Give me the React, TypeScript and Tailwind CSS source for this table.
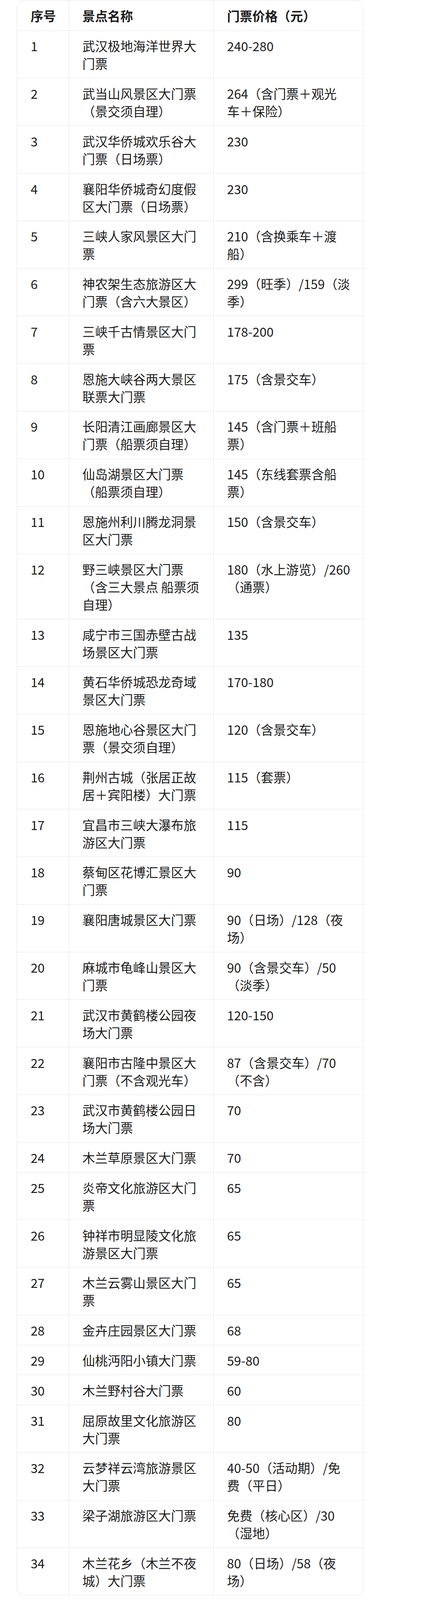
const rows: [string, string, string][] = [
  ["1", "武汉极地海洋世界大\n门票", "240-280"],
  ["2", "武当山风景区大门票\n（景交须自理）", "264（含门票＋观光\n车＋保险）"],
  ["3", "武汉华侨城欢乐谷大\n门票（日场票）", "230"],
  ["4", "襄阳华侨城奇幻度假\n区大门票（日场票）", "230"],
  ["5", "三峡人家风景区大门\n票", "210（含换乘车＋渡\n船）"],
  ["6", "神农架生态旅游区大\n门票（含六大景区）", "299（旺季）/159（淡\n季）"],
  ["7", "三峡千古情景区大门\n票", "178-200"],
  ["8", "恩施大峡谷两大景区\n联票大门票", "175（含景交车）"],
  ["9", "长阳清江画廊景区大\n门票（船票须自理）", "145（含门票＋班船\n票）"],
  ["10", "仙岛湖景区大门票\n（船票须自理）", "145（东线套票含船\n票）"],
  ["11", "恩施州利川腾龙洞景\n区大门票", "150（含景交车）"],
  ["12", "野三峡景区大门票\n（含三大景点 船票须\n自理）", "180（水上游览）/260\n（通票）"],
  ["13", "咸宁市三国赤壁古战\n场景区大门票", "135"],
  ["14", "黄石华侨城恐龙奇域\n景区大门票", "170-180"],
  ["15", "恩施地心谷景区大门\n票（景交须自理）", "120（含景交车）"],
  ["16", "荆州古城（张居正故\n居＋宾阳楼）大门票", "115（套票）"],
  ["17", "宜昌市三峡大瀑布旅\n游区大门票", "115"],
  ["18", "蔡甸区花博汇景区大\n门票", "90"],
  ["19", "襄阳唐城景区大门票", "90（日场）/128（夜\n场）"],
  ["20", "麻城市龟峰山景区大\n门票", "90（含景交车）/50\n（淡季）"],
  ["21", "武汉市黄鹤楼公园夜\n场大门票", "120-150"],
  ["22", "襄阳市古隆中景区大\n门票（不含观光车）", "87（含景交车）/70\n（不含）"],
  ["23", "武汉市黄鹤楼公园日\n场大门票", "70"],
  ["24", "木兰草原景区大门票", "70"],
  ["25", "炎帝文化旅游区大门\n票", "65"],
  ["26", "钟祥市明显陵文化旅\n游景区大门票", "65"],
  ["27", "木兰云雾山景区大门\n票", "65"],
  ["28", "金卉庄园景区大门票", "68"],
  ["29", "仙桃沔阳小镇大门票", "59-80"],
  ["30", "木兰野村谷大门票", "60"],
  ["31", "屈原故里文化旅游区\n大门票", "80"],
  ["32", "云梦祥云湾旅游景区\n大门票", "40-50（活动期）/免\n费（平日）"],
  ["33", "梁子湖旅游区大门票", "免费（核心区）/30\n（湿地）"],
  ["34", "木兰花乡（木兰不夜\n城）大门票", "80（日场）/58（夜\n场）"],
]

function Cell({ text, divider }: { text: string; divider?: boolean }) {
  return (
    <div className={`px-[34.2px] py-[15.4px] ${divider ? "border-r border-[#e6e6e6]" : ""}`}>
      {text.split("\n").map((line, i) => (
        <div key={i} className="h-[45px] whitespace-nowrap leading-[45px]">
          {line}
        </div>
      ))}
    </div>
  )
}

function Row({ cells, head, last }: { cells: [string, string, string]; head?: boolean; last?: boolean }) {
  return (
    <div
      className={`grid grid-cols-[132.4px_370.3px_1fr] ${last ? "" : "border-b border-[#e6e6e6]"} ${head ? "font-semibold" : ""}`}
    >
      <Cell text={cells[0]} divider />
      <Cell text={cells[1]} divider />
      <Cell text={cells[2]} />
    </div>
  )
}

export default function App() {
  return (
    <div className="bg-white pt-px text-[32.4px] text-[#1c1c1c] [font-family:'Noto_Sans_CJK_SC','Noto_Sans',sans-serif]">
      <div className="ml-[43.2px] w-[888.3px] overflow-hidden rounded-[18px] border border-[#e6e6e6]">
        <Row cells={["序号", "景点名称", "门票价格（元）"]} head />
        {rows.map((r, i) => (
          <Row key={r[0]} cells={r} last={i === rows.length - 1} />
        ))}
      </div>
    </div>
  )
}
